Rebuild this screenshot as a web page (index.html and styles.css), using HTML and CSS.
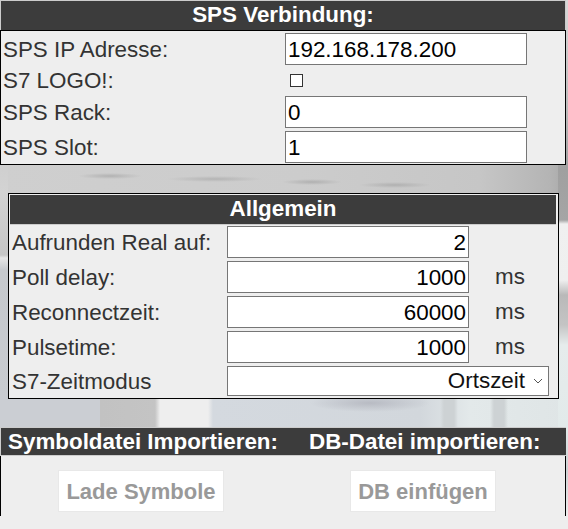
FILE: index.html
```html
<!DOCTYPE html>
<html lang="de">
<head>
<meta charset="utf-8">
<title>SPS Verbindung</title>
<link rel="stylesheet" href="styles.css">
</head>
<body>
<section class="conn">
  <h2 class="bar">SPS Verbindung:</h2>
  <div class="box conn-box">
    <div class="row"><label>SPS IP Adresse:</label><input type="text" value="192.168.178.200"></div>
    <div class="row check-row"><label>S7 LOGO!:</label><span class="check"></span></div>
    <div class="row"><label>SPS Rack:</label><input type="text" value="0"></div>
    <div class="row"><label>SPS Slot:</label><input type="text" value="1"></div>
  </div>
</section>
<section class="general">
  <h2 class="bar">Allgemein</h2>
  <div class="gen-body">
    <div class="row"><label>Aufrunden Real auf:</label><input class="num" type="text" value="2"></div>
    <div class="row"><label>Poll delay:</label><input class="num" type="text" value="1000"><span class="unit">ms</span></div>
    <div class="row"><label>Reconnectzeit:</label><input class="num" type="text" value="60000"><span class="unit">ms</span></div>
    <div class="row"><label>Pulsetime:</label><input class="num" type="text" value="1000"><span class="unit">ms</span></div>
    <div class="row"><label>S7-Zeitmodus</label>
      <div class="select"><span>Ortszeit</span><svg width="10" height="6" viewBox="0 0 10 6"><path d="M1 1l4 4 4-4" fill="none" stroke="#555" stroke-width="1"/></svg></div>
    </div>
  </div>
</section>
<section class="imports">
  <div class="bar bar-split">
    <h2>Symboldatei Importieren:</h2>
    <h2>DB-Datei importieren:</h2>
  </div>
  <div class="imports-body">
    <div class="edges">
      <button class="btn btn-a" disabled>Lade Symbole</button>
      <button class="btn btn-b" disabled>DB einfügen</button>
    </div>
  </div>
</section>
</body>
</html>
```
FILE: styles.css
```css
* { box-sizing: border-box; }
html, body { height: 100%; }
body {
  margin: 0;
  height: 529px;
  overflow: hidden;
  font-family: "Liberation Sans", Arial, sans-serif;
  color: #333;
  background-color: #eeeeee;
  position: relative;
}
body::before {
  content: "";
  position: absolute;
  inset: 0;
  z-index: -1;
  background:
    radial-gradient(ellipse 32px 3px at 110px 176px, #b2b2b2, transparent) no-repeat,
    radial-gradient(ellipse 48px 3px at 215px 179px, #b4b4b4, transparent) no-repeat,
    radial-gradient(ellipse 30px 3px at 312px 182px, #b0b0b0, transparent) no-repeat,
    radial-gradient(ellipse 36px 3px at 395px 185px, #b0b0b0, transparent) no-repeat,
    radial-gradient(ellipse 60px 9px at 370px 403px, #b8bbc3, transparent) no-repeat,
    linear-gradient(90deg, transparent 0, #cdd2d4 4px, #cdd2d4 14px, transparent 18px) 490px 398px / 40px 30px no-repeat,
    linear-gradient(90deg, transparent 0, #cdd2d4 4px, #cdd2d4 14px, transparent 18px) 440px 398px / 40px 30px no-repeat,
    linear-gradient(180deg, #c9c9c9 0, #cfcfcf 164px, #d3d3d3 192px, #c6c6c6 255px, #e6e6e6 258px, #c6c9cd 270px, #c8cbd0 400px, transparent 400px) 0 0 / 8px 100% no-repeat,
    linear-gradient(180deg, #d8d8d8 0, #bdbdbd 110px, #a0a0a0 170px, #a5a5a5 220px, #f0f0f0 224px, #efefef 280px, #b9b9b9 295px, #c4c4c4 325px, #e6ecec 345px, #e2eaea 428px, #cdd2d4 470px, #eeeeee 517px) 558px 0 / 10px 529px no-repeat,
    linear-gradient(90deg, #cfcfcf 0, #cccccc 300px, #c6c6c6 480px, #b4b4b4 550px, #a8a8a8 568px) 0 164px / 100% 29px no-repeat,
    linear-gradient(90deg, #cbced3 0, #cbced3 100px, #c2c2c2 100px, #c4c4c4 155px, #eeeeee 160px, #eeeeee 208px, #d4d9df 213px, #d2d7dc 420px, #e3e9ea 470px, #dfe5e6 568px) 0 398px / 100% 30px no-repeat;
}
h2 { margin: 0; font: inherit; }
.bar {
  background: #3c3c3c;
  color: #fff;
  font-weight: bold;
  font-size: 22.4px;
  line-height: 27px;
  text-align: center;
  border: 1px solid #cccccc;
  border-bottom-width: 0;
}
.row { display: flex; align-items: center; }
label { display: block; font-size: 22.4px; line-height: 25px; }
input {
  display: block;
  width: 242px;
  height: 32px;
  margin: 0;
  padding: 1px 2px 0;
  border: 1px solid #767676;
  background: #fff;
  color: #000;
  font-family: inherit;
  font-size: 22.4px;
  outline: 0;
}
.conn { width: 566px; }
.conn .bar { height: 30px; line-height: 27px; }
.box { border: 1px solid #000; background: #eee; }
.conn-box { height: 135px; padding: 2px 0 0 2px; }
.conn-box label { width: 282px; }
.conn-box .row { height: 32px; }
.conn-box .row + .row { margin-top: 3px; }
.conn-box .check-row { height: 25px; }
.check {
  display: block;
  width: 13px;
  height: 13px;
  margin-left: 5px;
  border: 1px solid #333;
  background: #fff;
}
.general {
  width: 551px;
  height: 206px;
  margin: 28px 0 0 8px;
  border: 1px solid #000;
  padding: 1px;
  background: #eee;
}
.general .bar { height: 30px; line-height: 28px; border: 0; border-bottom: 1px solid #ccc; margin: 0 1px 0 0; }
.gen-body { padding: 1px 0 0 2px; }
.gen-body .row { height: 32px; margin-top: 3px; }
.gen-body .row:first-child { margin-top: 0; }
.gen-body label { width: 215px; }
.num { text-align: right; }
.unit { margin-left: 26px; font-size: 22.4px; }
.gen-body .row:last-child { height: 30px; }
.select {
  display: flex;
  align-items: center;
  justify-content: flex-end;
  width: 322px;
  height: 30px;
  padding-right: 5px;
  border: 1px solid #767676;
  background: #fff;
  color: #111;
  font-size: 22.4px;
}
.select svg { margin-left: 8px; }
.imports { margin-top: 28px; width: 566px; }
.bar-split {
  display: flex;
  height: 29px;
  border: 1px solid #ccc;
  border-width: 1px 0 1px 1px;
  line-height: 28px;
  text-align: left;
  padding-left: 7px;
}
.bar-split h2:first-child { width: 301px; }
.imports-body { background: #eee; height: 72px; }
.edges {
  height: 60px;
  border-left: 1px solid #000;
  border-right: 1px solid #000;
  display: flex;
  padding: 14px 0 0 57px;
  align-items: flex-start;
}
.btn {
  height: 42px;
  margin: 0;
  padding: 2px 0 0;
  background: #fff;
  border: 1px solid #e8e8e8;
  color: #999;
  font-family: inherit;
  font-weight: bold;
  font-size: 22px;
}
.btn-a { width: 166px; }
.btn-b { width: 146px; margin-left: 126px; }
```
